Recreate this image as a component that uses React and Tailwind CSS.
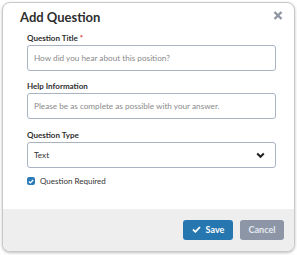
import React, { useState } from 'react';

const App = () => {
  const [required, setRequired] = useState(true);

  return (
    <div className="w-[297px] h-[255px] bg-white pt-[2px] pl-[2px] pr-[2px] pb-[3px]" style={{ fontFamily: 'Lato, "Liberation Sans", sans-serif' }}>
      <div className="h-full flex flex-col rounded-[8px] border border-[#c9c9c9] shadow-[0_1px_3px_rgba(0,0,0,0.25)] overflow-hidden bg-white">
        <div className="flex-1 pl-[24px] pr-[18px] pt-[6px]">
          <div className="flex items-start justify-between -mr-[7px]">
            <h2 className="text-[13px] font-bold text-[#2f2f2f] leading-[16px] -ml-[7px]">Add Question</h2>
            <button className="mt-[1px] w-[10px] h-[10px] flex items-center justify-center" aria-label="Close">
              <svg width="10" height="9" viewBox="0 0 10 9">
                <path d="M1.5 1 L8.5 8 M8.5 1 L1.5 8" stroke="#8e96a3" strokeWidth="2.4" strokeLinecap="butt" />
              </svg>
            </button>
          </div>

          <label className="block mt-[8px] text-[8px] font-bold text-[#2f2f2f] leading-[10px]">
            Question Title <span className="text-[#d9342b]">*</span>
          </label>
          <input
            className="block mt-[2px] w-full h-[26px] px-[6px] border border-[#a9b3c2] rounded-[3px] text-[8.2px] text-[#333] placeholder-[#8a8a8a] outline-none"
            placeholder="How did you hear about this position?"
          />

          <label className="block mt-[10px] text-[8px] font-bold text-[#2f2f2f] leading-[10px]">Help Information</label>
          <input
            className="block mt-[2px] w-full h-[26px] px-[6px] border border-[#a9b3c2] rounded-[3px] text-[8.2px] text-[#333] placeholder-[#8a8a8a] outline-none"
            placeholder="Please be as complete as possible with your answer."
          />

          <label className="block mt-[11px] text-[8px] font-bold text-[#2f2f2f] leading-[10px]">Question Type</label>
          <div className="mt-[2px] w-full h-[26px] px-[6px] border border-[#a9b3c2] rounded-[3px] flex items-center justify-between">
            <span className="text-[8.2px] text-[#333]">Text</span>
            <svg width="9" height="7" viewBox="0 0 9 7" className="mr-[4px]">
              <path d="M1.2 1.5 L4.5 4.8 L7.8 1.5" stroke="#222" strokeWidth="2" fill="none" />
            </svg>
          </div>

          <label className="mt-[9px] flex items-center gap-[5px] text-[8px] text-[#333] leading-[8px]">
            <span
              onClick={() => setRequired(!required)}
              className="w-[8px] h-[8px] rounded-[2px] bg-[#2b7bb9] flex items-center justify-center"
            >
              {required && (
                <svg width="6" height="5" viewBox="0 0 6 5">
                  <path d="M0.8 2.5 L2.4 3.9 L5.2 1" stroke="white" strokeWidth="1.3" fill="none" />
                </svg>
              )}
            </span>
            Question Required
          </label>
        </div>

        <div className="h-[42px] bg-[#eeeeee] flex items-center justify-end gap-[7px] pr-[10px] pb-[1px]">
          <button className="h-[20px] w-[50px] rounded-[3px] bg-[#2677b0] text-white text-[9px] font-bold flex items-center justify-center gap-[5px]">
            <svg width="9" height="7" viewBox="0 0 9 7">
              <path d="M1 3.5 L3.4 5.8 L8 1" stroke="white" strokeWidth="1.8" fill="none" />
            </svg>
            Save
          </button>
          <button className="h-[20px] w-[44px] rounded-[3px] bg-[#8c96a6] text-[#e6e9ee] text-[9px] font-bold">Cancel</button>
        </div>
      </div>
    </div>
  );
};

export default App;
